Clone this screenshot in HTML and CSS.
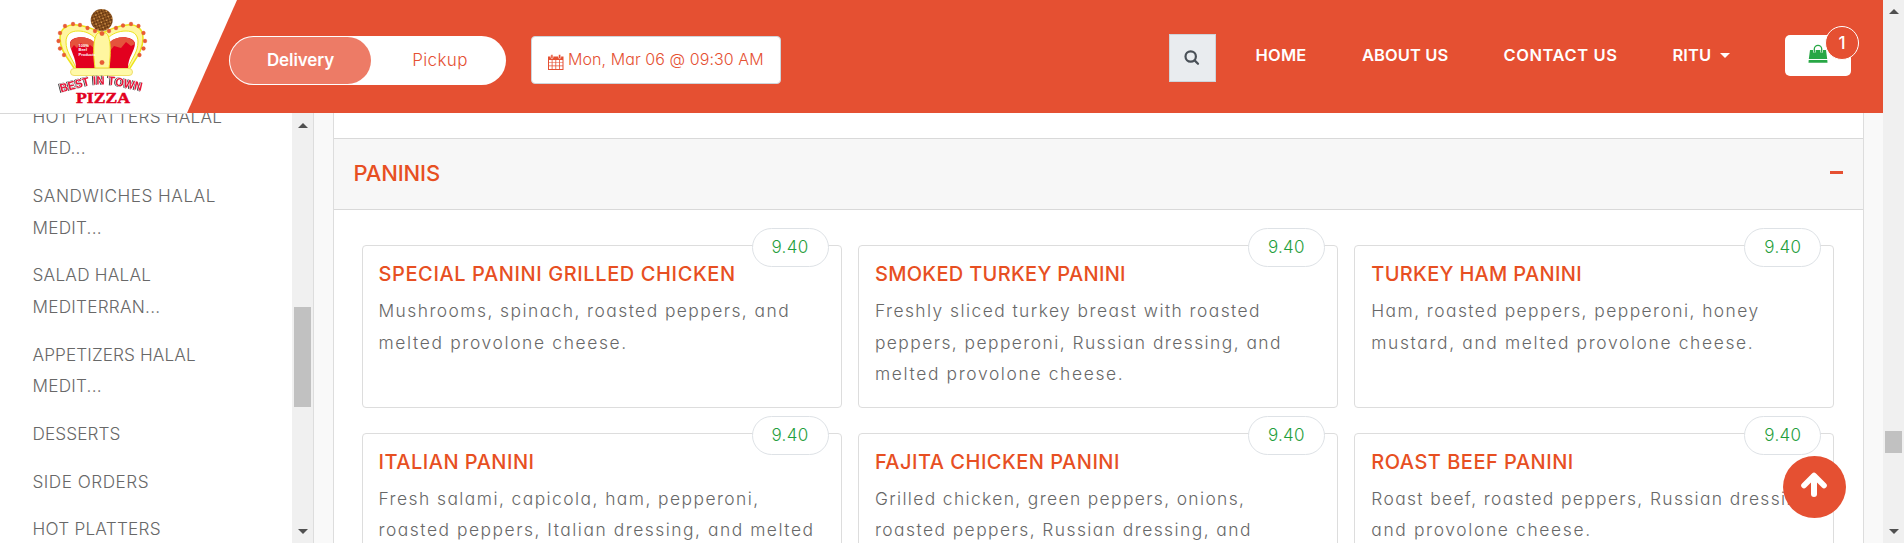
FILE: index.html
```
<!DOCTYPE html>
<html lang="en">
<head>
<meta charset="utf-8">
<title>Best In Town Pizza</title>
<link rel="stylesheet" href="styles.css">
</head>
<body>
<div class="viewport">
  <div class="page">
    <header class="header">
      <div class="brand">
        <svg class="logo" width="100" height="110" viewBox="50 0 100 110" role="img" aria-label="Best In Town Pizza">
          <defs>
            <pattern id="crust" width="4" height="4" patternUnits="userSpaceOnUse" patternTransform="rotate(25)">
              <rect width="4" height="4" fill="#6b3a12"/><circle cx="1.2" cy="1.2" r=".9" fill="#e0a050"/><circle cx="3.1" cy="3" r=".8" fill="#c9843a"/>
            </pattern>
            <path id="arc" d="M61 92.500L88 85.500Q102 83.500 116 85.500L143 91.500"/>
          </defs>
          <path d="M75 70C70 60 60 52 60 38C60 28 68 24 77 25C88 26 95 30 102 33C109 30 116 26 127 25C136 24 143 28 143 38C143 52 134 60 129 70Z" fill="#fff6a0" stroke="#ede41c" stroke-width="1.5"/>
          <path d="M76 68C72 58 66 52 66 42C66 34 71 31 78 31C86 31 91 34 95 38L97 68ZM128 68C132 58 138 52 138 42C138 34 133 31 126 31C118 31 112 34 108 38L106 68Z" fill="#fff" stroke="#ede41c"/>
          <path d="M76 68C76 57 70 51 70 43C71 36 87 35 94 42L96 68ZM128 68C128 57 135 51 135 43C133 36 117 35 110 42L108 68Z" fill="#e2001f"/>
          <path d="M70 44C71 36 87 35 94 42V48L90 45L86 48L81 43L77 48L74 45L71 49ZM135 44C133 36 117 35 110 42V51L114 46L121 48L126 42L131 46Z" fill="#e5533c"/>
          <path d="M95 68C93 54 93 36 98 33Q102 31 106 33C111 36 111 54 109 68Z" fill="#fff6a0" stroke="#ede41c"/>
          <rect x="70.5" y="68.500" width="62" height="7" rx="3.500" fill="#fff9a8" stroke="#efdf6c"/>
          <circle cx="101.700" cy="20" r="11" fill="url(#crust)"/>
          <g fill="#ea5b35" stroke="#d9502c" stroke-width=".3">
            <circle cx="65" cy="26" r="1.900"/><circle cx="73" cy="24" r="1.900"/><circle cx="80" cy="25" r="1.900"/><circle cx="87.500" cy="28" r="1.900"/><circle cx="95" cy="31" r="1.900"/><circle cx="102" cy="33.500" r="2.200"/>
            <circle cx="60" cy="33" r="1.900"/><circle cx="58.500" cy="41" r="1.900"/><circle cx="60" cy="48.500" r="1.900"/><circle cx="64" cy="55" r="1.900"/>
            <circle cx="109" cy="31" r="1.900"/><circle cx="116" cy="28" r="1.900"/><circle cx="123" cy="25.500" r="1.900"/><circle cx="131" cy="24" r="1.900"/><circle cx="138.500" cy="26" r="1.900"/>
            <circle cx="143.500" cy="33" r="1.900"/><circle cx="145" cy="41" r="1.900"/><circle cx="143.500" cy="48.500" r="1.900"/><circle cx="139.500" cy="55" r="1.900"/><circle cx="102" cy="62.500" r="2.200"/>
          </g>
          <g class="logo-note"><text x="78.500" y="46.500">100%</text><text x="78.500" y="51">Beef</text><text x="78.500" y="55.500">Products</text></g>
          <text class="logo-arc"><textPath href="#arc" textLength="82" lengthAdjust="spacingAndGlyphs">BEST IN TOWN</textPath></text>
          <text class="logo-pizza" x="76" y="102.700" textLength="54" lengthAdjust="spacingAndGlyphs">PIZZA</text>
        </svg>
      </div>
      <div class="toggle"><span class="toggle-item active">Delivery</span><span class="toggle-item">Pickup</span></div>
      <div class="date">
        <svg width="16" height="16" viewBox="0 0 16 16"><path d="M0 2.500h15.500V16H0zM1 6v2.400h2.700V6zm3.500 0v2.400h2.900V6zm3.700 0v2.400h2.900V6zm3.700 0v2.400h2.600V6zM1 9.100v2.500h2.700V9.100zm3.500 0v2.500h2.900V9.100zm3.700 0v2.500h2.900V9.100zm3.700 0v2.500h2.600V9.100zM1 12.300V15h2.700v-2.700zm3.500 0V15h2.900v-2.700zm3.700 0V15h2.900v-2.700zm3.700 0V15h2.600v-2.700z" fill="currentColor" fill-rule="evenodd"/><rect x="2.800" y=".5" width="2.200" height="4" rx="1" fill="#e55032" stroke="#fff" stroke-width=".6"/><rect x="10.500" y=".5" width="2.200" height="4" rx="1" fill="#e55032" stroke="#fff" stroke-width=".6"/></svg>
        <span>Mon, Mar 06 @ 09:30 AM</span>
      </div>
      <nav class="nav">
        <span class="search"><svg width="16" height="16" viewBox="0 0 16 16" fill="none" stroke="#495057" stroke-width="2.200" stroke-linecap="round"><circle cx="6.700" cy="6.500" r="5.200"/><path d="M10.600 10.400L14 13.800"/></svg></span>
        <span class="link home">HOME</span>
        <span class="link about">ABOUT US</span>
        <span class="link contact">CONTACT US</span>
        <span class="link user">RITU <i class="caret"></i></span>
        <span class="cart">
          <svg width="20" height="20" viewBox="0 0 20 20"><path d="M2 6h16l1.200 9H.8zM.7 16h18.600l.2 2.700H.5z" fill="#28a745"/><path d="M6.300 8.500V5a3.700 3.700 0 0 1 7.400 0v3.500" fill="none" stroke="#fff" stroke-width="2.600"/><path d="M6.300 8.500V5a3.700 3.700 0 0 1 7.400 0v3.500" fill="none" stroke="#28a745" stroke-width="1.300"/></svg>
          <b class="count">1</b>
        </span>
      </nav>
    </header>
    <div class="content">
      <aside class="sidebar">
        <ul class="categories">
          <li>HOT PLATTERS HALAL<br>MED...</li>
          <li><span class="wide">SANDWICHES HALAL</span><br>MEDIT...</li>
          <li>SALAD HALAL<br>MEDITERRAN...</li>
          <li><span class="tight">APPETIZERS HALAL</span><br>MEDIT...</li>
          <li class="tight">DESSERTS</li>
          <li class="wide">SIDE ORDERS</li>
          <li>HOT PLATTERS</li>
        </ul>
        <div class="scrollbar side-bar"><i class="up"></i><i class="thumb"></i><i class="down"></i></div>
      </aside>
      <main class="panel">
        <div class="section-head"><h2>PANINIS</h2><i class="minus"></i></div>
        <div class="grid">
          <article class="card"><b class="price">9.40</b><h3 class="wide">SPECIAL PANINI GRILLED CHICKEN</h3><p>Mushrooms, spinach, roasted peppers, and<br><span class="wide">melted provolone cheese.</span></p></article>
          <article class="card"><b class="price">9.40</b><h3 class="tight">SMOKED TURKEY PANINI</h3><p>Freshly sliced turkey breast with roasted<br>peppers, pepperoni, Russian dressing, and<br><span class="wide">melted provolone cheese.</span></p></article>
          <article class="card"><b class="price">9.40</b><h3 class="tight">TURKEY HAM PANINI</h3><p>Ham, roasted peppers, pepperoni, honey<br><span class="wide">mustard, and melted provolone cheese.</span></p></article>
          <article class="card"><b class="price">9.40</b><h3>ITALIAN PANINI</h3><p>Fresh salami, capicola, ham, pepperoni,<br><span class="mid">roasted peppers, Italian dressing, and melted</span></p></article>
          <article class="card"><b class="price">9.40</b><h3>FAJITA CHICKEN PANINI</h3><p><span class="tight">Grilled chicken, green peppers, onions,</span><br>roasted peppers, Russian dressing, and</p></article>
          <article class="card"><b class="price">9.40</b><h3>ROAST BEEF PANINI</h3><p><span class="tight">Roast beef, roasted peppers, Russian dressing,</span><br><span class="wide">and provolone cheese.</span></p></article>
        </div>
      </main>
    </div>
    <div class="to-top"><svg width="26" height="25" viewBox="0 0 26 25" fill="none" stroke="#fff"><path d="M3 13.500L13 3.500L23 13.500" stroke-width="5.600" stroke-linecap="round" stroke-linejoin="round"/><path d="M13 5V22" stroke-width="6" stroke-linecap="round"/></svg></div>
  </div>
  <div class="scrollbar page-bar"><i class="up"></i><i class="thumb"></i><i class="down"></i></div>
</div>
</body>
</html>
```
FILE: styles.css
```
* { box-sizing: border-box; }
body {
  margin: 0;
  overflow: hidden;
  font-family: Inter, "Open Sans", sans-serif;
  font-feature-settings: "cv11";
  color: #686868;
  background: #f9f9f9;
}
h2, h3, p, ul { margin: 0; padding: 0; list-style: none; }
.viewport { display: flex; width: 1904px; height: 543px; overflow: hidden; }
.page { position: relative; width: 1883px; height: 543px; }

/* header */
.header { position: relative; z-index: 2; display: flex; align-items: flex-start; height: 113px; background: #e55032; }
.header::after { content: ""; position: absolute; left: 0; top: 113px; width: 187px; height: 1px; background: #d8d8d8; }
.brand { width: 237px; height: 113px; padding-left: 50px; background: #fff; clip-path: polygon(0 0, 100% 0, 187px 100%, 0 100%); }
.logo { display: block; }
.logo-note { font: bold 4px "Liberation Sans", sans-serif; fill: #fff; }
.logo-arc { font: bold 12px "Liberation Sans", sans-serif; fill: #e8173a; stroke: #fff; stroke-width: 1px; paint-order: stroke; filter: drop-shadow(-.8px .9px 0 #444); }
.logo-pizza { font: bold 15.500px "Liberation Serif", serif; fill: #e2001f; stroke: #e2001f; stroke-width: .5px; }
.toggle { display: flex; width: 277px; height: 49px; margin: 36px 0 0 -8px; padding: 1px; border-radius: 25px; background: #fff; font-size: 17px; line-height: 45px; text-align: center; }
.toggle-item { width: 134px; padding: 1px 0 0 4px; color: #e55032; font-weight: 300; letter-spacing: .35px; }
.toggle-item.active { width: 141px; padding-left: 0; border-radius: 24px; background: #ed7b66; color: #fff; font-weight: 600; letter-spacing: -.1px; }
.date { display: flex; align-items: center; gap: 5px; width: 250px; height: 48px; margin: 36px 0 0 25px; padding-left: 16px; border: 1px solid #ced4da; border-radius: 4px; background: #fff; color: #e55032; font-size: 16px; font-weight: 300; white-space: nowrap; }
.date svg { margin-top: 3px; }
.date span { margin: -2px 0 0 -1px; letter-spacing: .08px; }
.nav { display: flex; align-items: flex-start; margin-left: 388px; color: #fff; font-size: 16.500px; font-weight: 600; }
.search { display: flex; align-items: center; justify-content: center; width: 47px; height: 48px; margin: 34px 39.500px 0 0; padding-right: 1px; border: 1px solid #ced4da; background: #e9ecef; }
.link { margin-top: 43px; line-height: 24px; white-space: nowrap; }
.home { width: 106.500px; letter-spacing: .2px; }
.about { width: 141.500px; letter-spacing: .1px; }
.contact { width: 169px; letter-spacing: .57px; }
.user { width: 112.500px; letter-spacing: .1px; }
.caret { display: inline-block; margin-left: 4px; vertical-align: 3px; border: 5px solid transparent; border-top-color: #fff; border-bottom: 0; }
.cart { position: relative; width: 66px; height: 41px; margin-top: 35px; padding: 9px 0 0 23px; border-radius: 5px; background: #fff; }
.count { position: absolute; left: 40px; top: -9px; width: 34px; height: 34px; border: 1px solid #fff; border-radius: 50%; background: #e55032; font-size: 17px; font-weight: 500; line-height: 33px; text-align: center; }

/* body */
.content { display: flex; height: 430px; overflow: hidden; }
.sidebar { display: flex; width: 314px; height: 430px; border-right: 1px solid #ddd; background: #fff; }
.categories { flex: 1; margin-top: -20.300px; font-size: 17.200px; font-weight: 300; line-height: 31.650px; letter-spacing: .24px; }
.categories li { padding: 8px 0 8px 32.500px; white-space: nowrap; }
.categories .wide { letter-spacing: .5px; }
.categories .tight { letter-spacing: .1px; }
.panel { width: 1531px; margin-left: 19px; padding-top: 25px; border: solid #ddd; border-width: 0 1px; background: #fff; }
.section-head { display: flex; align-items: center; justify-content: space-between; height: 72px; padding: 0 19px 3px 19.500px; border: solid #d9d9d9; border-width: 1px 0; background: #f7f7f7; }
.section-head h2 { color: #e74f22; font-size: 22px; font-weight: 500; letter-spacing: -.15px; }
.minus { width: 13px; height: 3px; margin-right: 1px; background: #e55032; }
.grid { display: grid; grid-template-columns: repeat(3, 480px); gap: 24.600px 16.400px; padding: 35px 27.500px; }
.card { position: relative; height: 163px; padding: 16px 0 0 16px; border: 1px solid #ddd; border-radius: 4px; white-space: nowrap; }
.card h3 { margin-bottom: 9px; color: #e74f22; font-size: 20px; font-weight: 500; line-height: 24px; letter-spacing: .5px; }
.card h3.wide { letter-spacing: .6px; }
.card h3.tight { letter-spacing: .32px; }
.card p { font-size: 17.400px; font-weight: 300; line-height: 31.600px; letter-spacing: 1.450px; }
.card p .wide { letter-spacing: 1.650px; }
.card p .mid { letter-spacing: 1.530px; }
.card p .tight { letter-spacing: 1.370px; }
.price { position: absolute; top: -18px; right: 12px; width: 77px; height: 39px; border: 1px solid #dee2e6; border-radius: 20px; background: #fff; color: #1f9e3c; font-size: 17px; font-weight: 300; line-height: 36px; letter-spacing: .3px; text-align: center; }
.to-top { position: absolute; z-index: 3; left: 1783px; top: 456px; display: flex; align-items: center; justify-content: center; width: 63px; height: 62px; padding: 0 1px 5px 0; border-radius: 50%; background: #e55032; }

/* scrollbars */
.scrollbar { display: flex; flex-direction: column; align-items: center; width: 21px; background: #f0f0f0; }
.scrollbar .up { border: 5px solid transparent; border-top: 0; border-bottom-color: #505050; }
.scrollbar .down { margin: auto 0 9px; border: 5px solid transparent; border-bottom: 0; border-top-color: #505050; }
.scrollbar .thumb { width: 17px; background: #c1c1c1; }
.side-bar .up { margin: 10px 0 179px; }
.side-bar .thumb { height: 100px; }
.page-bar .up { margin: 9px 0 417px; }
.page-bar .thumb { height: 22px; }
```
